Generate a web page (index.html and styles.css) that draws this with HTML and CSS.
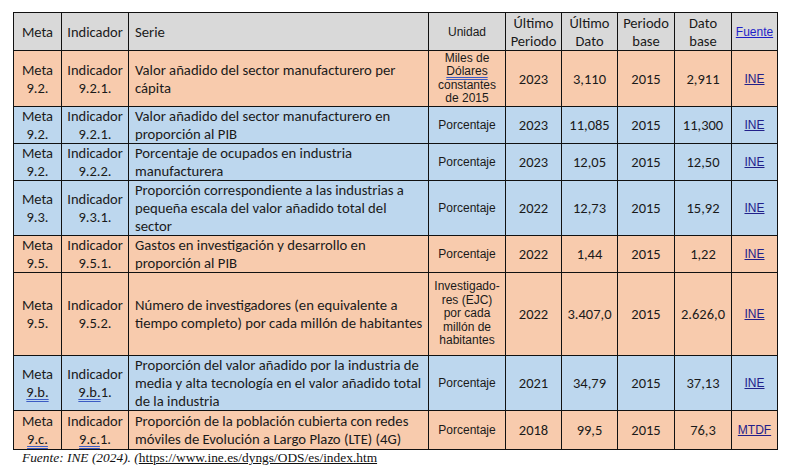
FILE: index.html
```html
<!DOCTYPE html>
<html lang="es">
<head>
<meta charset="utf-8">
<title>Indicadores ODS 9</title>
<link rel="stylesheet" href="styles.css">
</head>
<body>
<table class="ods">
  <colgroup>
    <col class="c-meta"><col class="c-ind"><col class="c-serie"><col class="c-unidad">
    <col class="c-num"><col class="c-num"><col class="c-num2"><col class="c-num2"><col class="c-fuente">
  </colgroup>
  <thead>
    <tr class="hdr">
      <th class="ctr">Meta</th>
      <th class="ctr">Indicador</th>
      <th class="left">Serie</th>
      <th class="arial">Unidad</th>
      <th class="ctr">Último Periodo</th>
      <th class="ctr">Último Dato</th>
      <th class="ctr">Periodo base</th>
      <th class="ctr">Dato base</th>
      <th class="arial"><a class="hlink" href="#">Fuente</a></th>
    </tr>
  </thead>
  <tbody>
    <tr class="orange r1">
      <td class="ctr">Meta 9.2.</td>
      <td class="ctr">Indicador 9.2.1.</td>
      <td class="left">Valor añadido del sector manufacturero per<br>cápita</td>
      <td class="arial tight">Miles de <span class="spell">Dólares</span> constantes de 2015</td>
      <td class="ctr">2023</td><td class="ctr">3,110</td><td class="ctr">2015</td><td class="ctr">2,911</td>
      <td class="arial"><a class="src" href="#">INE</a></td>
    </tr>
    <tr class="blue r2">
      <td class="ctr">Meta 9.2.</td>
      <td class="ctr">Indicador 9.2.1.</td>
      <td class="left">Valor añadido del sector manufacturero en<br>proporción al PIB</td>
      <td class="arial">Porcentaje</td>
      <td class="ctr">2023</td><td class="ctr">11,085</td><td class="ctr">2015</td><td class="ctr">11,300</td>
      <td class="arial"><a class="src" href="#">INE</a></td>
    </tr>
    <tr class="blue r3">
      <td class="ctr">Meta 9.2.</td>
      <td class="ctr">Indicador 9.2.2.</td>
      <td class="left">Porcentaje de ocupados en industria<br>manufacturera</td>
      <td class="arial">Porcentaje</td>
      <td class="ctr">2023</td><td class="ctr">12,05</td><td class="ctr">2015</td><td class="ctr">12,50</td>
      <td class="arial"><a class="src" href="#">INE</a></td>
    </tr>
    <tr class="blue r4">
      <td class="ctr">Meta 9.3.</td>
      <td class="ctr">Indicador 9.3.1.</td>
      <td class="left">Proporción correspondiente a las industrias a<br>pequeña escala del valor añadido total del<br>sector</td>
      <td class="arial">Porcentaje</td>
      <td class="ctr">2022</td><td class="ctr">12,73</td><td class="ctr">2015</td><td class="ctr">15,92</td>
      <td class="arial"><a class="src" href="#">INE</a></td>
    </tr>
    <tr class="orange r5">
      <td class="ctr">Meta 9.5.</td>
      <td class="ctr">Indicador 9.5.1.</td>
      <td class="left">Gastos en investigación y desarrollo en<br>proporción al PIB</td>
      <td class="arial">Porcentaje</td>
      <td class="ctr">2022</td><td class="ctr">1,44</td><td class="ctr">2015</td><td class="ctr">1,22</td>
      <td class="arial"><a class="src" href="#">INE</a></td>
    </tr>
    <tr class="orange r6">
      <td class="ctr">Meta 9.5.</td>
      <td class="ctr">Indicador 9.5.2.</td>
      <td class="left">Número de investigadores (en equivalente a<br>tiempo completo) por cada millón de habitantes</td>
      <td class="arial tight">Investigado-res (EJC) por cada millón de habitantes</td>
      <td class="ctr">2022</td><td class="ctr">3.407,0</td><td class="ctr">2015</td><td class="ctr">2.626,0</td>
      <td class="arial"><a class="src" href="#">INE</a></td>
    </tr>
    <tr class="blue r7">
      <td class="ctr">Meta <span class="spell">9.b.</span></td>
      <td class="ctr">Indicador <span class="spell">9.b.</span>1.</td>
      <td class="left">Proporción del valor añadido por la industria de<br>media y alta tecnología en el valor añadido total<br>de la industria</td>
      <td class="arial">Porcentaje</td>
      <td class="ctr">2021</td><td class="ctr">34,79</td><td class="ctr">2015</td><td class="ctr">37,13</td>
      <td class="arial"><a class="src" href="#">INE</a></td>
    </tr>
    <tr class="orange r8">
      <td class="ctr">Meta <span class="spell">9.c.</span></td>
      <td class="ctr">Indicador <span class="spell">9.c.</span>1.</td>
      <td class="left">Proporción de la población cubierta con redes<br>móviles de Evolución a Largo Plazo (LTE) (4G)</td>
      <td class="arial">Porcentaje</td>
      <td class="ctr">2018</td><td class="ctr">99,5</td><td class="ctr">2015</td><td class="ctr">76,3</td>
      <td class="arial"><a class="src" href="#">MTDF</a></td>
    </tr>
  </tbody>
</table>
<p class="note"><em>Fuente: INE (2024). (</em><a class="url" href="#">https://www.ine.es/dyngs/ODS/es/index.htm</a></p>
</body>
</html>
```

FILE: styles.css
```css
html, body {
  margin: 0;
  padding: 0;
  background: #ffffff;
}
body {
  padding: 12px 0 0 13px;
}
.ods {
  border-collapse: collapse;
  table-layout: fixed;
  width: 765px;
  font-family: Carlito, Lato, "Liberation Sans", sans-serif;
  font-size: 14px;
  color: #1a1a1a;
}
.c-meta { width: 48px; }
.c-ind { width: 67px; }
.c-serie { width: 300px; }
.c-unidad { width: 77px; }
.c-num { width: 56px; }
.c-num2 { width: 57px; }
.c-fuente { width: 46px; }
.ods th, .ods td {
  border: 1px solid #111;
  padding: 0 3px;
  vertical-align: middle;
  font-weight: normal;
  line-height: 18px;
}
.ods td.left, .ods th.left {
  text-align: left;
  padding-left: 6px;
  padding-right: 2px;
  font-size: 14.7px;
  white-space: nowrap;
  overflow: hidden;
}
.ods td.ctr, .ods th.ctr {
  text-align: center;
  font-size: 14.5px;
}
.ods .arial {
  font-family: "Liberation Sans", Arial, sans-serif;
  font-size: 12px;
  text-align: center;
  line-height: 14px;
}
.ods .tight { line-height: 13.5px; padding: 0 4px; }
.hdr { background: #d9d9d9; height: 38px; }
.orange { background: #f8cbad; }
.blue { background: #bdd7ee; }
.r1 { height: 56px; }
.r2 { height: 37px; }
.r3 { height: 36px; }
.r4 { height: 55px; }
.r5 { height: 36px; }
.r6 { height: 83px; }
.r7 { height: 55px; }
.r8 { height: 39px; }
.hlink { color: #1f1fc8; text-decoration: underline; }
.src { color: #22208a; text-decoration: underline; }
.spell {
  text-decoration: underline double #3b5bc4;
  text-underline-offset: 2px;
}
.note {
  margin: 0 0 0 9px;
  font-family: "Liberation Serif", "Times New Roman", serif;
  font-size: 13.4px;
  color: #111;
}
.note em { font-style: italic; }
.url { color: #111; text-decoration: underline; }
```
